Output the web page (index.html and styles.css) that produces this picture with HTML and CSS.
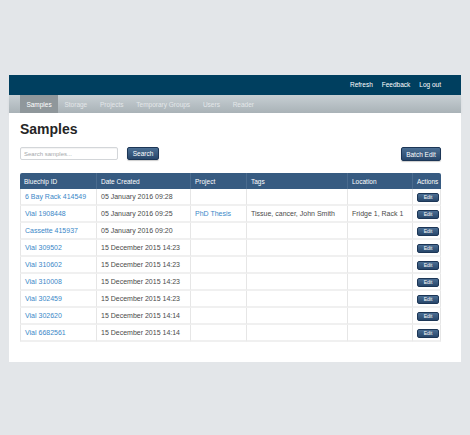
FILE: index.html
```html
<!DOCTYPE html>
<html>
<head>
<meta charset="utf-8">
<link rel="stylesheet" href="styles.css">
</head>
<body>
<div class="page">
  <div class="topbar">
    <a href="#">Refresh</a>
    <a href="#">Feedback</a>
    <a href="#">Log out</a>
  </div>
  <div class="nav">
    <a class="tab active" href="#">Samples</a>
    <a class="tab" href="#">Storage</a>
    <a class="tab" href="#">Projects</a>
    <a class="tab" href="#">Temporary Groups</a>
    <a class="tab" href="#">Users</a>
    <a class="tab" href="#">Reader</a>
  </div>
  <div class="content">
    <h1 class="title">Samples</h1>
    <div class="toolbar">
      <div class="search">
        <input class="search-input" type="text" placeholder="Search samples...">
        <button class="btn btn-search">Search</button>
      </div>
      <button class="btn btn-batch">Batch Edit</button>
    </div>
    <table class="samples">
      <colgroup>
        <col class="c1"><col class="c2"><col class="c3"><col class="c4"><col class="c5"><col class="c6">
      </colgroup>
      <thead>
        <tr><th>Bluechip ID</th><th>Date Created</th><th>Project</th><th>Tags</th><th>Location</th><th>Actions</th></tr>
      </thead>
      <tbody>
        <tr><td><a href="#">6 Bay Rack 414549</a></td><td>05 January 2016 09:28</td><td></td><td></td><td></td><td><button class="edit">Edit</button></td></tr>
        <tr><td><a href="#">Vial 1908448</a></td><td>05 January 2016 09:25</td><td><a href="#">PhD Thesis</a></td><td>Tissue, cancer, John Smith</td><td>Fridge 1, Rack 1</td><td><button class="edit">Edit</button></td></tr>
        <tr><td><a href="#">Cassette 415937</a></td><td>05 January 2016 09:20</td><td></td><td></td><td></td><td><button class="edit">Edit</button></td></tr>
        <tr><td><a href="#">Vial 309502</a></td><td>15 December 2015 14:23</td><td></td><td></td><td></td><td><button class="edit">Edit</button></td></tr>
        <tr><td><a href="#">Vial 310602</a></td><td>15 December 2015 14:23</td><td></td><td></td><td></td><td><button class="edit">Edit</button></td></tr>
        <tr><td><a href="#">Vial 310008</a></td><td>15 December 2015 14:23</td><td></td><td></td><td></td><td><button class="edit">Edit</button></td></tr>
        <tr><td><a href="#">Vial 302459</a></td><td>15 December 2015 14:23</td><td></td><td></td><td></td><td><button class="edit">Edit</button></td></tr>
        <tr><td><a href="#">Vial 302620</a></td><td>15 December 2015 14:14</td><td></td><td></td><td></td><td><button class="edit">Edit</button></td></tr>
        <tr><td><a href="#">Vial 6682561</a></td><td>15 December 2015 14:14</td><td></td><td></td><td></td><td><button class="edit">Edit</button></td></tr>
      </tbody>
    </table>
  </div>
</div>
</body>
</html>
```

FILE: styles.css
```css
html, body {
  margin: 0;
  padding: 0;
  background: #e3e6e9;
  font-family: "Liberation Sans", Arial, sans-serif;
}
.page {
  width: 452px;
  margin: 75px 0 0 9px;
}
.topbar {
  height: 20px;
  box-sizing: border-box;
  padding: 0 20px 2px;
  background: #003f5f;
  display: flex;
  justify-content: flex-end;
  align-items: center;
  gap: 9px;
}
.topbar a {
  color: #ffffff;
  font-size: 6.5px;
  text-decoration: none;
}
.nav {
  height: 18px;
  display: flex;
  padding: 0 11px;
  background: linear-gradient(#c7cfd3, #a9b2b7);
  box-shadow: 0 2px 3px rgba(0,0,0,0.06);
}
.tab {
  display: flex;
  align-items: center;
  padding: 0 6.4px;
  font-size: 6.5px;
  color: #e3e7e9;
  text-decoration: none;
}
.tab.active {
  background: #8f979b;
  color: #ffffff;
}
.content {
  background: #ffffff;
  padding: 8px 20px 20px 11px;
}
.title {
  margin: 0;
  font-size: 14px;
  line-height: 16px;
  font-weight: bold;
  color: #252525;
}
.toolbar {
  margin-top: 10px;
  display: flex;
  justify-content: space-between;
  align-items: flex-start;
  height: 14px;
}
.search {
  display: flex;
  gap: 9px;
}
.search-input {
  box-sizing: border-box;
  width: 98px;
  height: 13px;
  margin: 0;
  padding: 0 3px;
  border: 1px solid #d3d6d9;
  border-radius: 2px;
  font-family: inherit;
  font-size: 6px;
  color: #555;
  box-shadow: inset 0 1px 1px rgba(0,0,0,0.05);
}
.search-input::placeholder {
  color: #a5a8ab;
}
.btn {
  box-sizing: border-box;
  margin: 0;
  padding: 0;
  border: 1px solid #1c3656;
  border-radius: 2px;
  background: linear-gradient(#4b6e93, #28476b);
  color: #ffffff;
  font-family: inherit;
  font-size: 6.5px;
  box-shadow: 0 1px 1px rgba(0,0,0,0.2);
}
.btn-search {
  width: 32px;
  height: 13px;
}
.btn-batch {
  width: 40px;
  height: 14px;
}
.samples {
  margin-top: 12px;
  width: 421px;
  table-layout: fixed;
  border-collapse: separate;
  border-spacing: 0;
  font-size: 7px;
  color: #4a4a4a;
}
.c1 { width: 76px; }
.c2 { width: 94px; }
.c3 { width: 56px; }
.c4 { width: 101px; }
.c5 { width: 65px; }
.c6 { width: 29px; }
.samples th {
  height: 16px;
  padding: 0 4px;
  text-align: left;
  font-weight: normal;
  font-size: 6.5px;
  color: #ffffff;
  background: #375b81;
  border-left: 1px solid #4a6b8e;
  box-sizing: border-box;
}
.samples th:first-child {
  border-left: none;
  border-top-left-radius: 2px;
}
.samples th:last-child {
  border-top-right-radius: 2px;
}
.samples td {
  height: 17px;
  padding: 0 4px;
  box-sizing: border-box;
  border-left: 1px solid #e6e6e6;
  border-bottom: 2px solid #f0f0f0;
  white-space: nowrap;
  overflow: hidden;
}
.samples td:last-child {
  border-right: 1px solid #e6e6e6;
}
.samples a {
  color: #3a87c8;
  text-decoration: none;
}
.edit {
  box-sizing: border-box;
  width: 22px;
  height: 9px;
  margin: 1px 0 0;
  padding: 0;
  border: 1px solid #1c3656;
  border-radius: 2px;
  background: linear-gradient(#4b6e93, #28476b);
  color: #ffffff;
  font-family: inherit;
  font-size: 5px;
  line-height: 7px;
  display: block;
}
```
